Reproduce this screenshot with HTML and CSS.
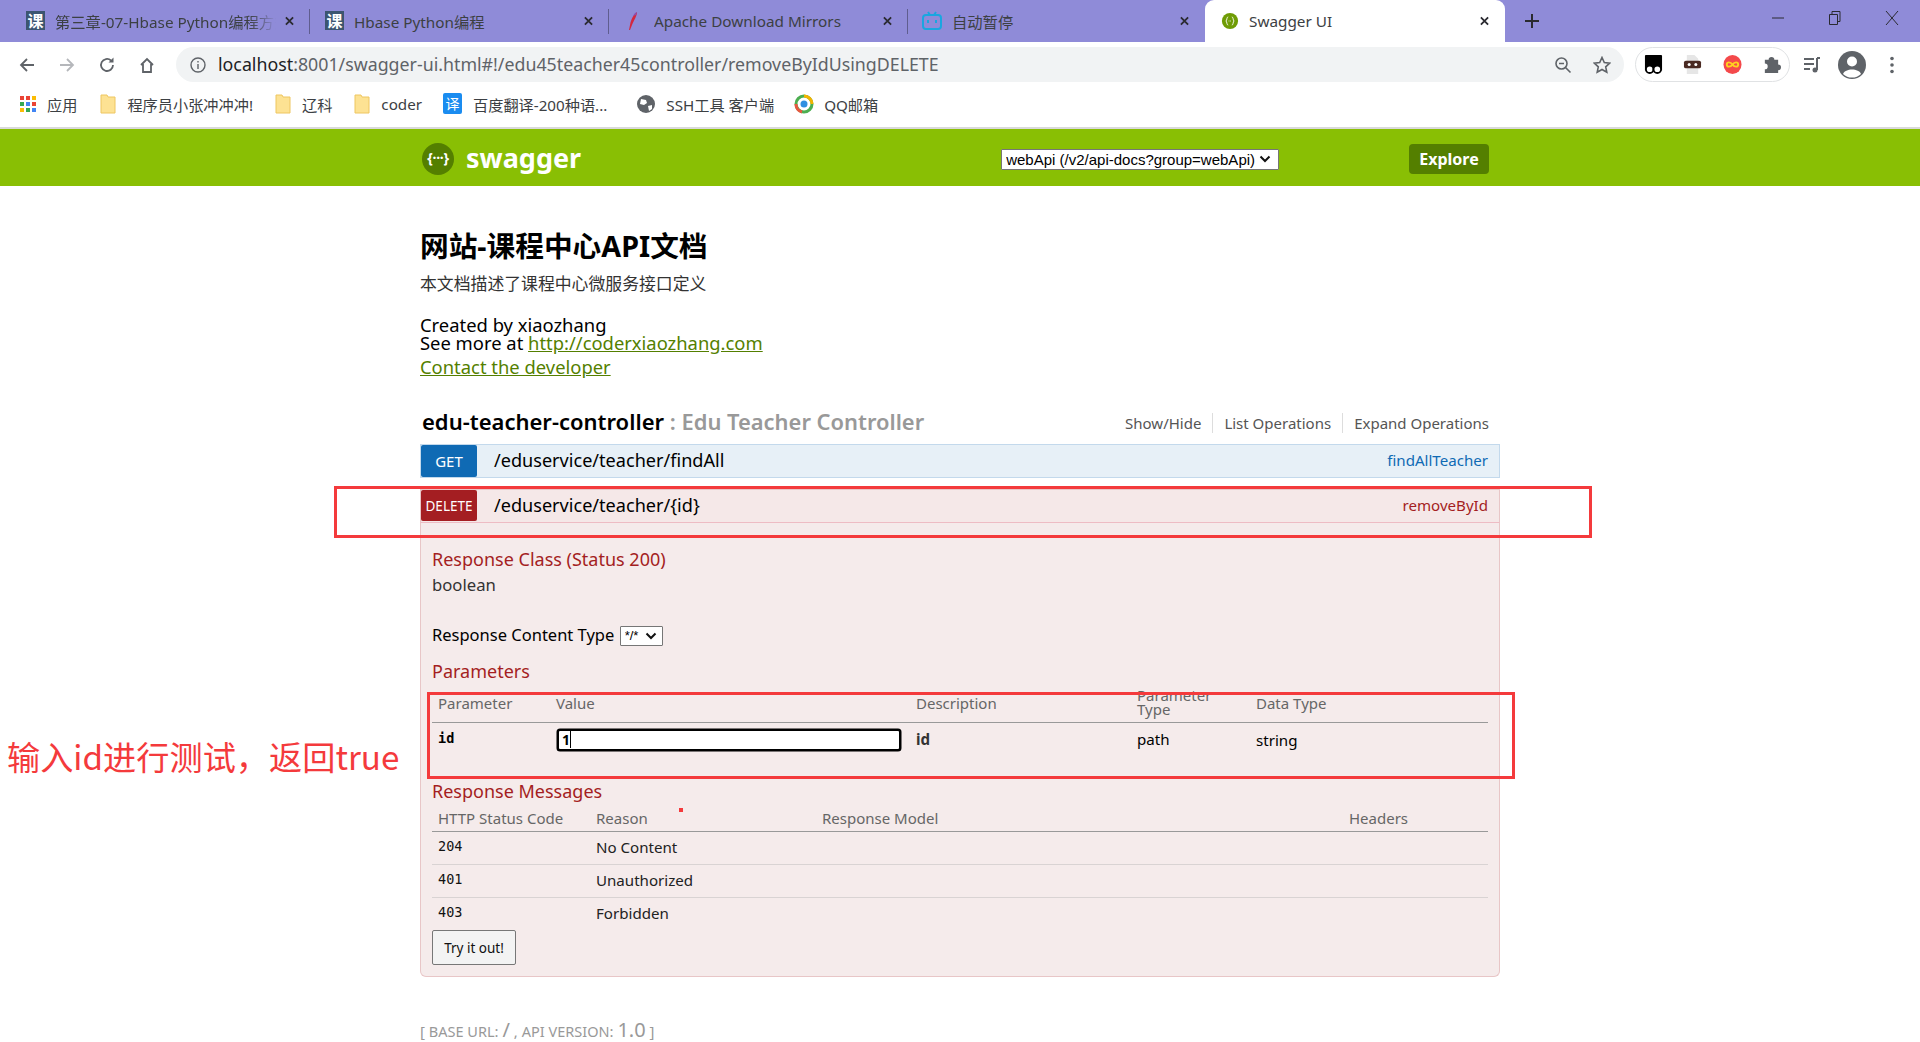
FILE: index.html
```html
<!DOCTYPE html>
<html lang="zh">
<head>
<meta charset="utf-8">
<title>Swagger UI</title>
<link rel="stylesheet" href="styles.css">
</head>
<body>
<div class="tabbar">
  <div class="tab sep">
    <span class="fav-ke">课</span>
    <span class="tab-title fade">第三章-07-Hbase Python编程方式</span>
    <svg class="tab-x" viewBox="0 0 10 10"><path d="M1 1l8 8M9 1l-8 8"/></svg>
  </div>
  <div class="tab sep">
    <span class="fav-ke">课</span>
    <span class="tab-title">Hbase Python编程</span>
    <svg class="tab-x" viewBox="0 0 10 10"><path d="M1 1l8 8M9 1l-8 8"/></svg>
  </div>
  <div class="tab sep">
    <svg class="fav" viewBox="0 0 20 20"><path d="M13 1C10 3 7 8 6 14l-1 5 1 0 2-5C10 9 13 5 13 1z" fill="#d3273e"/><path d="M13 1c-1 0-3 2-4 4l3-1z" fill="#8a4fb0"/></svg>
    <span class="tab-title">Apache Download Mirrors</span>
    <svg class="tab-x" viewBox="0 0 10 10"><path d="M1 1l8 8M9 1l-8 8"/></svg>
  </div>
  <div class="tab tab-narrow">
    <svg class="fav" viewBox="0 0 20 20"><rect x="1" y="4" width="18" height="14" rx="3" fill="none" stroke="#1aa6e0" stroke-width="2"/><path d="M6 1l2 3M14 1l-2 3" stroke="#1aa6e0" stroke-width="2"/><path d="M6 9v3M14 9v3" stroke="#1aa6e0" stroke-width="2"/></svg>
    <span class="tab-title">自动暂停</span>
    <svg class="tab-x" viewBox="0 0 10 10"><path d="M1 1l8 8M9 1l-8 8"/></svg>
  </div>
  <div class="tab tab-active">
    <svg class="fav fav-sw" viewBox="0 0 20 20"><circle cx="10" cy="10" r="9" fill="#6f9c05"/><path d="M8 5.500C6 5.500 7 9 5.500 10 7 11 6 14.500 8 14.500M12 5.500C14 5.500 13 9 14.500 10 13 11 14 14.500 12 14.500" fill="none" stroke="#fff" stroke-width="1"/><path d="M8.500 10h.8M10 10h.8" stroke="#fff"/></svg>
    <span class="tab-title">Swagger UI</span>
    <svg class="tab-x" viewBox="0 0 10 10"><path d="M1 1l8 8M9 1l-8 8"/></svg>
  </div>
  <svg class="newtab" viewBox="0 0 14 14"><path d="M7 0v14M0 7h14"/></svg>
  <div class="winctl">
    <span class="wc"><svg viewBox="0 0 14 14"><path d="M1 7h12"/></svg></span>
    <span class="wc"><svg viewBox="0 0 14 14"><path d="M1.500 3.500h8v10h-8zM4 3.500V.5h8v10h-2.500"/></svg></span>
    <span class="wc"><svg viewBox="0 0 14 14"><path d="M1 0l12 14M13 0L1 14"/></svg></span>
  </div>
</div>

<div class="toolbar">
  <span class="navbtn"><svg viewBox="0 0 18 18"><path d="M16 9H3M9 3L3 9l6 6"/></svg></span>
  <span class="navbtn nav-off"><svg viewBox="0 0 18 18"><path d="M2 9h13M9 3l6 6-6 6"/></svg></span>
  <span class="navbtn"><svg viewBox="0 0 18 18"><path d="M15 9a6 6 0 1 1-2-4.500"/><path class="solid" d="M15.500 1.500v5h-5z"/></svg></span>
  <span class="navbtn"><svg viewBox="0 0 18 18"><path d="M3 9l6-6 6 6M5 8v8h8V8"/></svg></span>
  <div class="omni">
    <svg class="omni-info" viewBox="0 0 16 16"><circle cx="8" cy="8" r="7"/><path d="M8 7v5M8 4v1.600"/></svg>
    <span class="url"><span class="url-host">localhost</span>:8001/swagger-ui.html#!/edu45teacher45controller/removeByIdUsingDELETE</span>
    <svg class="omni-zoom" viewBox="0 0 18 18"><circle cx="7.500" cy="7.500" r="5.500"/><path d="M11.500 11.500l5 5M5 7.500h5"/></svg>
    <svg class="omni-star" viewBox="0 0 18 18"><path d="M9 1.500l2.300 5 5.400.6-4 3.700 1.100 5.400L9 13.500l-4.800 2.700 1.100-5.400-4-3.700 5.400-.6z"/></svg>
  </div>
  <div class="extpill">
    <span class="extcell"><svg viewBox="0 0 20 22"><path d="M2 1h16a1 1 0 0 1 1 1v15H1V2a1 1 0 0 1 1-1z" fill="#000"/><circle cx="6" cy="16" r="4" fill="#fff" stroke="#000" stroke-width="2"/><circle cx="14" cy="16" r="4" fill="#fff" stroke="#000" stroke-width="2"/></svg></span>
    <span class="extcell"><svg viewBox="0 0 20 22"><path d="M4 1h8l4 4v16H4z" fill="#e6e6e6"/><rect x="1" y="7" width="18" height="8" rx="2" fill="#4a2a22"/><circle cx="6.500" cy="11" r="1.600" fill="#fff"/><circle cx="13.500" cy="11" r="1.600" fill="#fff"/></svg></span>
    <span class="extcell"><svg viewBox="0 0 20 22"><ellipse cx="10" cy="11" rx="9.500" ry="10" fill="#f4494b"/><path d="M10 11c-2-3-6-3-6 0s4 3 6 0 6-3 6 0-4 3-6 0z" fill="none" stroke="#ffd21f" stroke-width="2"/></svg></span>
    <span class="extcell"><svg viewBox="0 0 20 22"><path d="M3 6h4a3 3 0 0 1 6 0h4v5a3 3 0 0 1 0 6v3H3v-4a3 3 0 0 0 0-6z" fill="#5f6368"/></svg></span>
  </div>
  <span class="rightbtn"><svg viewBox="0 0 20 20"><path d="M2 4h10M2 9h10M2 14h6" stroke="#5f6368" stroke-width="2"/><path d="M15 3v12" stroke="#5f6368" stroke-width="2"/><circle cx="13" cy="15" r="2.500" fill="#5f6368"/><path d="M15 3h3" stroke="#5f6368" stroke-width="2"/></svg></span>
  <span class="rightbtn"><svg class="profile" viewBox="0 0 28 28"><circle cx="14" cy="14" r="14" fill="#5f6368"/><circle cx="14" cy="10.500" r="5" fill="#fff"/><path d="M5 23c2-6 16-6 18 0a13 13 0 0 1-18 0z" fill="#fff"/></svg></span>
  <span class="rightbtn"><svg viewBox="0 0 20 20"><circle cx="10" cy="3.500" r="1.800" fill="#5f6368"/><circle cx="10" cy="10" r="1.800" fill="#5f6368"/><circle cx="10" cy="16.500" r="1.800" fill="#5f6368"/></svg></span>
</div>

<div class="bookmarks">
  <svg class="bm-apps" viewBox="0 0 18 18"><g><rect x="1" y="1" width="4" height="4" fill="#ea4335"/><rect x="7" y="1" width="4" height="4" fill="#ea4335"/><rect x="13" y="1" width="4" height="4" fill="#fbbc05"/><rect x="1" y="7" width="4" height="4" fill="#34a853"/><rect x="7" y="7" width="4" height="4" fill="#4285f4"/><rect x="13" y="7" width="4" height="4" fill="#ea4335"/><rect x="1" y="13" width="4" height="4" fill="#fbbc05"/><rect x="7" y="13" width="4" height="4" fill="#34a853"/><rect x="13" y="13" width="4" height="4" fill="#4285f4"/></g></svg>
  <span class="bm-text bm-t1">应用</span>
  <svg class="bm-folder bm-f1" viewBox="0 0 16 20"><path d="M1 1h6l1 2h7v16H1z" fill="#fde293" stroke="#eec660"/></svg>
  <span class="bm-text bm-t2">程序员小张冲冲冲!</span>
  <svg class="bm-folder bm-f2" viewBox="0 0 16 20"><path d="M1 1h6l1 2h7v16H1z" fill="#fde293" stroke="#eec660"/></svg>
  <span class="bm-text bm-t3">辽科</span>
  <svg class="bm-folder bm-f3" viewBox="0 0 16 20"><path d="M1 1h6l1 2h7v16H1z" fill="#fde293" stroke="#eec660"/></svg>
  <span class="bm-text bm-t4">coder</span>
  <span class="bm-yi">译</span>
  <span class="bm-text bm-t5">百度翻译-200种语...</span>
  <svg class="bm-globe" viewBox="0 0 18 18"><circle cx="9" cy="9" r="9" fill="#5f6368"/><path d="M4 4l5 1 1 3-3 2-4-1zM11 11l4-1 0 4-3 2z" fill="#fff"/></svg>
  <span class="bm-text bm-t6">SSH工具 客户端</span>
  <svg class="bm-qq" viewBox="0 0 20 22"><circle cx="10" cy="11" r="8" fill="none" stroke="#4cae50" stroke-width="3"/><path d="M10 3a8 8 0 0 1 8 8" fill="none" stroke="#f4b400" stroke-width="3"/><path d="M2 11a8 8 0 0 0 6 8" fill="none" stroke="#e8573f" stroke-width="3"/><circle cx="10" cy="11" r="3.500" fill="#2f8fe0"/></svg>
  <span class="bm-text bm-t7">QQ邮箱</span>
</div>

<header class="sw-header">
  <div class="sw-header-in">
    <span class="sw-logo">{···}</span>
    <span class="sw-brand">swagger</span>
    <select class="sw-select"><option>webApi (/v2/api-docs?group=webApi)</option></select>
    <a class="sw-explore">Explore</a>
  </div>
</header>

<main class="sw-main">
  <h1 class="info-title">网站-课程中心API文档</h1>
  <p class="info-desc">本文档描述了课程中心微服务接口定义</p>
  <div class="info-by">Created by xiaozhang</div>
  <div class="info-by">See more at <a class="info-link">http://coderxiaozhang.com</a></div>
  <div class="info-contact"><a class="info-link">Contact the developer</a></div>

  <div class="res-head">
    <h2 class="res-title"><b class="res-name">edu-teacher-controller</b><span class="res-sub"> : Edu Teacher Controller</span></h2>
    <ul class="res-links">
      <li>Show/Hide</li>
      <li>List Operations</li>
      <li>Expand Operations</li>
    </ul>
  </div>

  <div class="op op-get">
    <span class="verb verb-get">GET</span>
    <span class="op-path">/eduservice/teacher/findAll</span>
    <span class="op-name">findAllTeacher</span>
  </div>

  <div class="op op-del">
    <span class="verb verb-del">DELETE</span>
    <span class="op-path">/eduservice/teacher/{id}</span>
    <span class="op-name">removeById</span>
  </div>

  <section class="panel">
    <h4 class="p-h p-class">Response Class (Status 200)</h4>
    <div class="p-bool">boolean</div>
    <div class="p-ctype">Response Content Type
      <select class="ct-select"><option>*/*</option></select>
    </div>
    <h4 class="p-h p-params">Parameters</h4>
    <table class="tbl tbl-params">
      <colgroup><col class="c1"><col class="c2"><col class="c3"><col class="c4"><col class="c5"></colgroup>
      <thead><tr><th>Parameter</th><th>Value</th><th>Description</th><th class="th-two"><span class="two">Parameter<br>Type</span></th><th>Data Type</th></tr></thead>
      <tbody><tr>
        <td class="mono-b">id</td>
        <td><input class="val-input" value="1"></td>
        <td class="desc-b">id</td>
        <td class="td-path">path</td>
        <td class="td-str">string</td>
      </tr></tbody>
    </table>
    <h4 class="p-h p-msgs">Response Messages</h4>
    <table class="tbl tbl-msgs">
      <colgroup><col class="m1"><col class="m2"><col class="m3"><col class="m4"></colgroup>
      <thead><tr><th>HTTP Status Code</th><th>Reason</th><th>Response Model</th><th>Headers</th></tr></thead>
      <tbody>
        <tr><td class="mono">204</td><td>No Content</td><td></td><td></td></tr>
        <tr><td class="mono">401</td><td>Unauthorized</td><td></td><td></td></tr>
        <tr><td class="mono">403</td><td>Forbidden</td><td></td><td></td></tr>
      </tbody>
    </table>
    <button class="try">Try it out!</button>
  </section>

  <footer class="sw-foot">[ <span class="sc">BASE URL</span>: <span class="ver">/</span> , <span class="sc">API VERSION</span>: <span class="ver">1.0</span> ]</footer>
</main>

<div class="mark mark-row"></div>
<div class="mark mark-table"></div>
<div class="mark-dot"></div>
<div class="mark-note">输入id进行测试，返回true</div>
</body>
</html>
```

FILE: styles.css
```css
* { box-sizing: border-box; }
html, body { margin: 0; padding: 0; }
body {
  height: 1042px;
  overflow: hidden;
  position: relative;
  background: #fff;
  color: #000;
  font-family: "Noto Sans", "Noto Sans CJK SC", sans-serif;
}

/* tab strip */
.tabbar { height: 42px; background: #8f8bd8; display: flex; align-items: stretch; padding-left: 11px; }
.tab { width: 299px; display: flex; align-items: center; padding: 0 11px 1px 15px; position: relative; color: #3c4043; font-size: 15.300px; }
.sep::after { content: ""; position: absolute; right: 0; top: 9px; height: 25px; width: 1px; background: #5f5d8f; }
.tab-narrow { width: 297px; padding-left: 14px; }
.tab-active { width: 300px; background: #fff; border-radius: 9px 9px 0 0; padding-left: 16px; }
.fav-ke { width: 19px; height: 19px; flex: none; background: #3c5570; color: #fff; font-family: "Noto Sans CJK SC", sans-serif; font-size: 16px; font-weight: 700; line-height: 19px; text-align: center; overflow: hidden; }
.fav { width: 20px; height: 20px; flex: none; }
.fav-sw { width: 18px; height: 18px; }
.tab-title { flex: 1; margin-left: 10px; white-space: nowrap; overflow: hidden; }
.fade { max-width: 221px; -webkit-mask-image: linear-gradient(90deg, #000 88%, transparent); mask-image: linear-gradient(90deg, #000 88%, transparent); }
.tab-x { width: 9px; height: 10px; flex: none; margin-left: auto; margin-right: 5px; fill: none; stroke: #2a2a30; stroke-width: 2; }
.newtab { width: 14px; height: 14px; margin: 14px 0 0 20px; fill: none; stroke: #2a2a30; stroke-width: 2; flex: none; }
.winctl { margin-left: auto; display: flex; padding-top: 8px; }
.wc { width: 57px; height: 20px; display: flex; justify-content: center; align-items: center; }
.wc svg { width: 14px; height: 14px; fill: none; stroke: #2a2a30; stroke-width: 1; }

/* toolbar */
.toolbar { height: 42px; display: flex; align-items: flex-start; padding: 5px 0 0 7px; background: #fff; }
.navbtn { width: 40px; height: 35px; flex: none; display: flex; align-items: center; justify-content: center; }
.navbtn svg { width: 18px; height: 18px; fill: none; stroke: #5f6368; stroke-width: 1.800; }
.navbtn .solid { fill: #5f6368; stroke: none; }
.nav-off svg { stroke: #b5b7bb; }
.omni { width: 1448px; height: 35px; margin-left: 9px; flex: none; background: #f1f3f4; border-radius: 18px; display: flex; align-items: center; padding-left: 14px; }
.omni-info { width: 16px; height: 16px; flex: none; fill: none; stroke: #5f6368; stroke-width: 1.400; }
.url { margin: 0 0 2px 12px; font-size: 17.800px; color: #5f6368; white-space: nowrap; }
.url-host { color: #202124; }
.omni-zoom { width: 18px; height: 18px; margin-left: auto; fill: none; stroke: #5f6368; stroke-width: 1.600; flex: none; }
.omni-star { width: 18px; height: 18px; margin: 0 13px 0 21px; fill: none; stroke: #5f6368; stroke-width: 1.600; flex: none; }
.extpill { width: 155px; height: 35px; margin-left: 11px; flex: none; border: 1px solid #e0e2e4; border-radius: 18px; display: flex; gap: 5.500px; align-items: center; }
.extcell { width: 34px; display: flex; justify-content: center; flex: none; }
.extcell svg { width: 19px; height: 21px; }
.rightbtn { width: 40px; height: 35px; flex: none; display: flex; align-items: center; justify-content: center; }
.extpill + .rightbtn { margin-left: 2px; }
.rightbtn svg { width: 20px; height: 20px; }
.rightbtn .profile { width: 28px; height: 28px; }

/* bookmarks */
.bookmarks { height: 45px; display: flex; align-items: center; padding: 0 0 4px 19px; background: #fff; border-bottom: 2px solid #d9d9d9; font-size: 15.200px; color: #3c4043; }
.bm-apps { width: 18px; height: 18px; flex: none; }
.bm-text { white-space: nowrap; flex: none; }
.bm-t1 { margin-left: 10px; }
.bm-folder { width: 16px; height: 20px; flex: none; }
.bm-f1 { margin-left: 23px; }
.bm-t2 { margin-left: 11px; }
.bm-f2 { margin-left: 22px; }
.bm-t3 { margin-left: 11px; }
.bm-f3 { margin-left: 22px; }
.bm-t4 { margin-left: 11px; }
.bm-yi { width: 19px; height: 21px; margin-left: 21px; flex: none; background: #1a8cf0; color: #fff; font-size: 14px; line-height: 21px; text-align: center; border-radius: 2px; font-family: "Noto Sans CJK SC", sans-serif; }
.bm-t5 { margin-left: 11px; }
.bm-globe { width: 18px; height: 18px; margin-left: 30px; flex: none; }
.bm-t6 { margin-left: 11px; }
.bm-qq { width: 20px; height: 22px; margin-left: 20px; flex: none; }
.bm-t7 { margin-left: 10px; }

/* swagger header */
.sw-header { height: 57px; background: #89bf04; }
.sw-header-in { width: 1080px; height: 57px; margin: 0 auto; display: flex; align-items: center; padding: 3px 11px 0 2px; }
.sw-logo { width: 32px; height: 32px; flex: none; border-radius: 50%; background: #547f00; color: #fff; font-size: 14px; font-weight: 700; line-height: 30px; text-align: center; letter-spacing: -.3px; }
.sw-brand { margin: 0 0 3px 12px; color: #fff; font-size: 27px; font-weight: 700; line-height: 32px; }
.sw-select { margin-left: 420px; width: 278px; height: 21px; font-family: "Liberation Sans", sans-serif; font-size: 15px; color: #000; padding: 0 0 0 4px; border: 1px solid #767676; border-radius: 1px; appearance: none; -webkit-appearance: none; background: #fff url("data:image/svg+xml,%3Csvg xmlns='http://www.w3.org/2000/svg' width='12' height='8'%3E%3Cpath d='M1.500 1.500L6 6l4.500-4.500' fill='none' stroke='%23111' stroke-width='2'/%3E%3C/svg%3E") no-repeat right 7px center; }
.sw-explore { margin-left: auto; width: 80px; height: 30px; background: #547f00; color: #fff; font-size: 16px; font-weight: 700; line-height: 30px; text-align: center; border-radius: 4px; }

/* page body */
.sw-main { width: 1080px; margin: 0 auto; }
.info-title { margin: 43px 0 0; font-size: 28.700px; line-height: 34px; font-weight: 700; }
.info-desc { margin: 9px 0 0; font-size: 16.850px; line-height: 24px; color: #333; }
.info-by { font-size: 18.400px; line-height: 18px; }
.info-desc + .info-by { margin-top: 20px; }
.info-contact { margin-top: 5px; font-size: 18.400px; line-height: 20px; }
.info-link { color: #547f00; text-decoration: underline; }

.res-head { margin-top: 30px; height: 30px; display: flex; align-items: center; justify-content: space-between; padding: 0 11px 2px 2px; }
.res-title { margin: 0; font-size: 21.900px; line-height: 30px; font-weight: 600; }
.res-name { font-weight: 600; font-size: 22px; }
.res-sub { color: #999; }
.res-links { list-style: none; margin: 4px 0 0; padding: 0; display: flex; font-size: 15px; color: #555; }
.res-links li { padding: 0 11px; border-right: 1px solid #ddd; line-height: 20px; }
.res-links li:last-child { padding-right: 0; border-right: 0; }

.op { height: 34px; display: flex; align-items: center; margin-top: 7px; padding-right: 11px; }
.op-get { background: #e7f0f7; border: 1px solid #c3d9ec; }
.op-del { margin-top: 11px; background: #f5e8e8; border: 1px solid #e8c6c7; border-bottom-color: #eebcc4; }
.verb { width: 56px; height: 32px; flex: none; color: #fff; font-size: 15px; line-height: 32px; text-align: center; border-radius: 2px; }
.verb-get { background: #0f6ab4; }
.verb-del { background: #a41e22; margin-bottom: 1px; height: 31px; font-size: 13.500px; }
.op-path { margin: 0 0 2px 17px; font-size: 18.100px; color: #000; }
.op-name { margin: 0 0 2px auto; font-size: 15.100px; }
.op-get .op-name { color: #0f6ab4; }
.op-del .op-name { color: #a41e22; }

.panel { height: 454px; background: #f5ebeb; border: 1px solid #e8c6c7; border-top: 0; border-radius: 0 0 6px 6px; padding: 23px 11px 11px; }
.p-h { margin: 0; font-weight: 400; font-size: 18px; line-height: 26px; color: #a41e22; }
.p-bool { margin-top: 2px; font-size: 16.700px; line-height: 22px; color: #333; }
.p-ctype { margin-top: 27px; font-size: 16.500px; line-height: 24px; color: #000; }
.ct-select { width: 43px; height: 20px; margin-left: 1px; font-family: "Liberation Sans", sans-serif; font-size: 13px; vertical-align: 1px; padding: 0 0 0 4px; border: 1px solid #767676; border-radius: 1px; appearance: none; -webkit-appearance: none; background: #fff url("data:image/svg+xml,%3Csvg xmlns='http://www.w3.org/2000/svg' width='12' height='8'%3E%3Cpath d='M1.500 1.500L6 6l4.500-4.500' fill='none' stroke='%23111' stroke-width='2'/%3E%3C/svg%3E") no-repeat right 5px center; }
.p-params { margin-top: 11px; }
.p-msgs { margin-top: 9px; }

.tbl { width: 1056px; border-collapse: collapse; table-layout: fixed; }
.tbl th { text-align: left; font-weight: 400; color: #666; font-size: 15px; padding: 0 6px; vertical-align: top; border-bottom: 1px solid #999; }
.tbl td { padding: 0 6px; vertical-align: top; font-size: 15.100px; color: #222; }
.tbl-params { margin-top: 9px; }
.c1 { width: 118px; } .c2 { width: 360px; } .c3 { width: 221px; } .c4 { width: 119px; } .c5 { width: 238px; }
.tbl-params thead tr { height: 29px; }
.tbl-params th { line-height: 20px; }
.two { display: block; line-height: 14px; margin-top: -5px; }
.tbl-params tbody tr { height: 47px; }
.tbl-params td { padding-top: 6px; }
.tbl-params .mono-b { font-family: "DejaVu Sans Mono", monospace; font-weight: 700; font-size: 13.500px; line-height: 16px; padding-top: 7px; color: #000; }
.val-input { display: block; width: 344px; height: 22px; margin-left: 1px; padding: 0 3px; border: 2px solid #000; border-radius: 3px; background: linear-gradient(#000, #000) 11px center / 1px 17px no-repeat, #fff; font-family: "Noto Sans", sans-serif; font-size: 14px; font-weight: 700; box-shadow: 0 0 0 .5px #000; outline: 0; }
.tbl-params .desc-b { font-weight: 700; color: #333; }
.tbl-params .td-path { color: #000; }
.tbl-params .td-str { color: #000; padding-top: 7px; }

.tbl-msgs { margin-top: 3px; }
.m1 { width: 158px; } .m2 { width: 226px; } .m3 { width: 527px; } .m4 { width: 145px; }
.tbl-msgs thead tr { height: 24px; }
.tbl-msgs th { line-height: 22px; }
.tbl-msgs tbody tr { height: 33px; border-bottom: 1px solid #d9d3d3; }
.tbl-msgs tbody tr:last-child { border-bottom: 0; }
.tbl-msgs td { line-height: 22px; padding-top: 4px; color: #222; }
.tbl-msgs .mono { font-family: "DejaVu Sans Mono", monospace; font-size: 13.500px; padding-top: 3px; color: #111; }

.try { display: block; width: 84px; height: 35px; padding: 0; background: #f3f3f3; border: 1px solid #777; border-radius: 2px; font-family: "Noto Sans", sans-serif; font-size: 13.500px; color: #111; }

.sw-foot { margin-top: 43px; height: 20px; font-size: 15px; line-height: 20px; color: #999; white-space: nowrap; }
.sc { font-size: 14.500px; }
.ver { font-size: 20px; }

/* red review marks drawn over the screenshot */
.mark { position: absolute; border: 3px solid #f43a3c; pointer-events: none; }
.mark-row { left: 334px; top: 486px; width: 1258px; height: 52px; }
.mark-table { left: 427px; top: 692px; width: 1088px; height: 87px; }
.mark-dot { position: absolute; left: 679px; top: 808px; width: 4px; height: 4px; background: #f43a3c; }
.mark-note { position: absolute; left: 7px; top: 733px; font-family: "Noto Sans CJK SC", "Noto Sans", sans-serif; font-size: 33.200px; line-height: 46px; color: #f43a3c; white-space: nowrap; }
```
